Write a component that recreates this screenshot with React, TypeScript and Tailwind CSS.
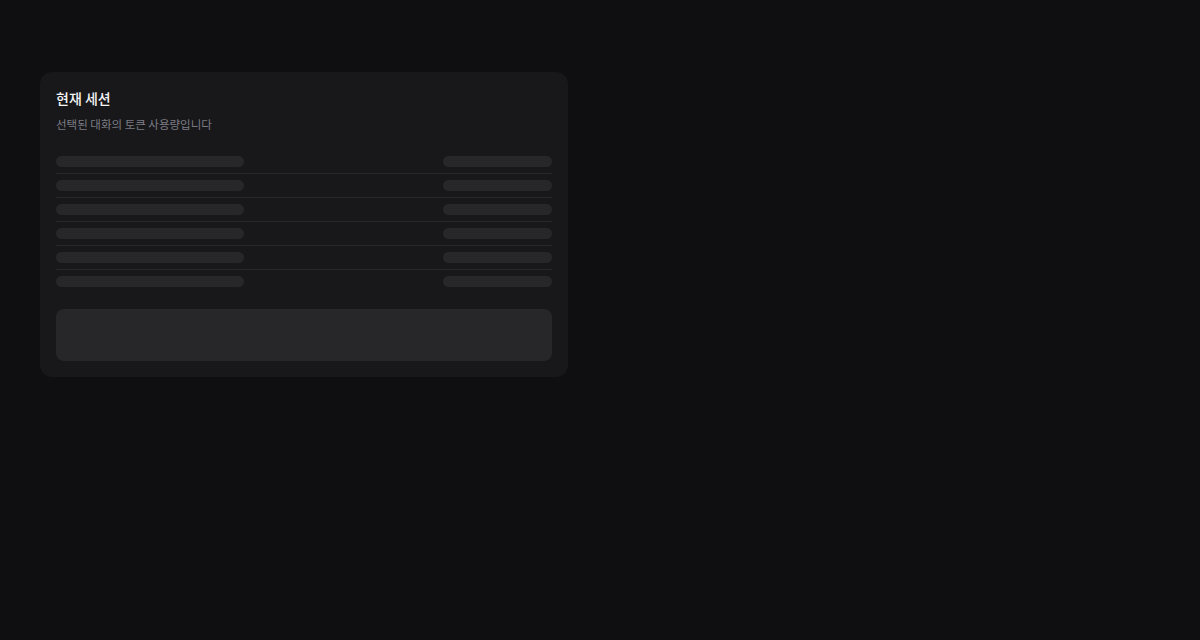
export default function App() {
  const rows = [0, 1, 2, 3, 4, 5];

  return (
    <div
      className="min-h-[640px] w-full bg-[#0f0f11] px-10 pt-[72px]"
      style={{ fontFamily: '"Noto Sans CJK KR", "Noto Sans", sans-serif' }}
    >
      <div className="w-[528px] rounded-xl bg-[#18181b] p-4">
        <h2 className="text-[14px] font-medium leading-5 text-[#f4f4f5]">현재 세션</h2>
        <p className="mt-2 text-[11.5px] leading-4 text-[#7c7c84]">선택된 대화의 토큰 사용량입니다</p>

        <div className="mt-[18px]">
          {rows.map((i) => (
            <div
              key={i}
              className="flex items-center justify-between border-b border-[#27272a] py-1.5 last:border-b-0"
            >
              <div className="h-[11px] w-[188px] rounded-full bg-[#27272a]" />
              <div className="h-[11px] w-[109px] rounded-full bg-[#27272a]" />
            </div>
          ))}
        </div>

        <div className="mt-4 h-[52px] rounded-lg bg-[#27272a]" />
      </div>
    </div>
  );
}
